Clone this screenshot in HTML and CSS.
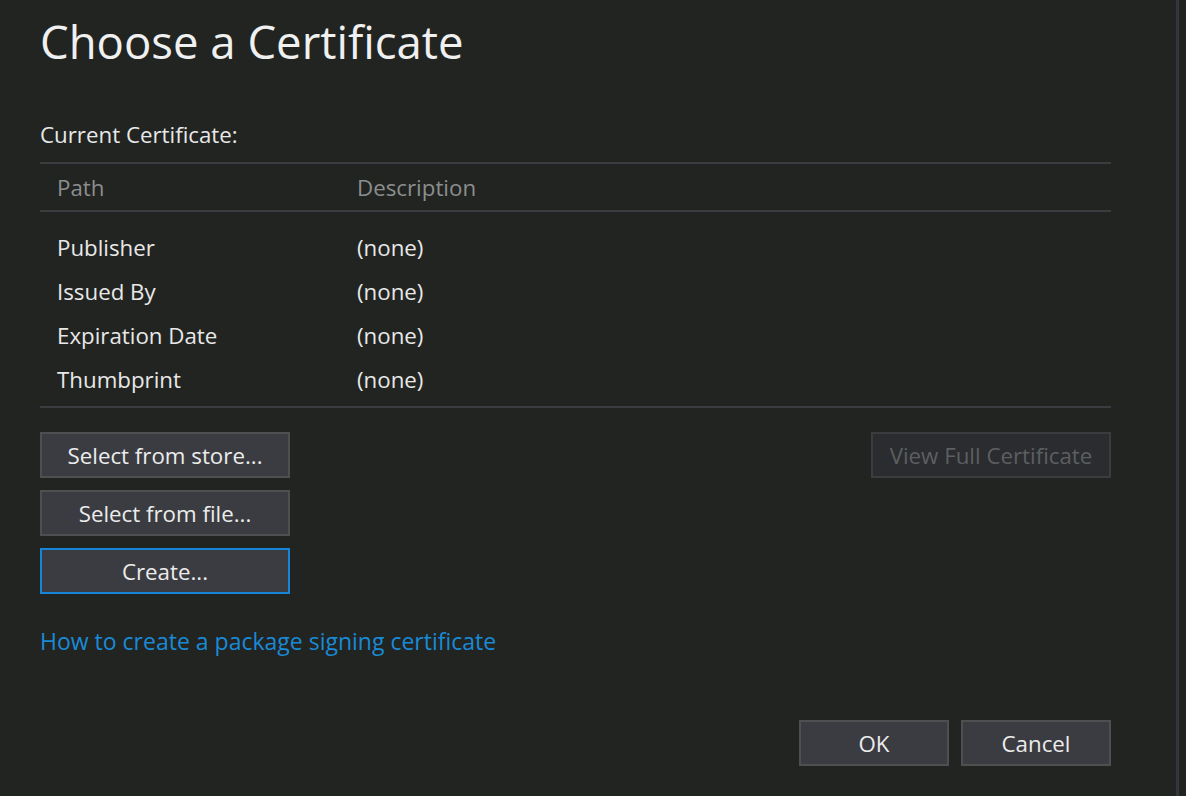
FILE: index.html
```html
<!DOCTYPE html>
<html>
<head>
<meta charset="utf-8">
<link rel="stylesheet" href="styles.css">
</head>
<body>
<div class="window">
  <div class="dialog">
    <h1 class="title">Choose a Certificate</h1>
    <div class="label">Current Certificate:</div>
    <div class="table">
      <div class="thead">
        <span class="c1">Path</span><span class="c2">Description</span>
      </div>
      <div class="tbody">
        <div class="row"><span class="c1">Publisher</span><span class="c2">(none)</span></div>
        <div class="row"><span class="c1">Issued By</span><span class="c2">(none)</span></div>
        <div class="row"><span class="c1">Expiration Date</span><span class="c2">(none)</span></div>
        <div class="row"><span class="c1">Thumbprint</span><span class="c2">(none)</span></div>
      </div>
    </div>
    <div class="actions">
      <div class="left-actions">
        <button class="btn wide">Select from store...</button>
        <button class="btn wide">Select from file...</button>
        <button class="btn wide focused">Create...</button>
      </div>
      <button class="btn view disabled">View Full Certificate</button>
    </div>
    <a class="link" href="#">How to create a package signing certificate</a>
    <div class="footer">
      <button class="btn small">OK</button>
      <button class="btn small">Cancel</button>
    </div>
  </div>
</div>
</body>
</html>
```
FILE: styles.css
```css
html, body {
  margin: 0;
  padding: 0;
  background: #212421;
  height: 100%;
}
body {
  font-family: "Open Sans", "Noto Sans", sans-serif;
  color: #e8e8e8;
  overflow: hidden;
}
.window {
  width: 1176px;
  height: 796px;
  border-right: 3px solid #33363a;
  box-sizing: content-box;
}
.dialog {
  padding: 0 65px 0 40px;
  display: flex;
  flex-direction: column;
}
.title {
  margin: 0;
  font-weight: 400;
  font-size: 45.5px;
  line-height: 56px;
  margin-top: 13px;
  color: #f0f0f0;
}
.label {
  margin-top: 52px;
  font-size: 22.3px;
  line-height: 28px;
}
.table {
  margin-top: 13px;
  border-top: 2px solid #3a3d3f;
}
.thead {
  display: flex;
  height: 46px;
  align-items: center;
  border-bottom: 2px solid #3a3d3f;
  color: #8c8e8e;
  font-size: 22.3px;
}
.c1 {
  width: 300px;
  padding-left: 17px;
  flex: none;
}
.tbody {
  padding: 13px 0 5px;
  border-bottom: 2px solid #3a3d3f;
}
.row {
  display: flex;
  height: 44px;
  align-items: center;
  font-size: 22.3px;
}
.actions {
  display: flex;
  justify-content: space-between;
  align-items: flex-start;
  margin-top: 24px;
}
.left-actions {
  display: flex;
  flex-direction: column;
  gap: 12px;
}
.btn {
  font-family: inherit;
  font-size: 22.3px;
  color: #ececec;
  background: #3a3c41;
  border: 2px solid #4d4f50;
  height: 46px;
  padding: 0;
  margin: 0;
}
.wide {
  width: 250px;
}
.focused {
  border-color: #1886d8;
}
.view {
  width: 240px;
}
.disabled {
  background: #2a2c30;
  border-color: #3a3c3e;
  color: #5d5f60;
}
.link {
  margin-top: 33px;
  color: #1a8ad6;
  text-decoration: none;
  font-size: 23px;
  line-height: 28px;
  align-self: flex-start;
}
.footer {
  margin-top: 65px;
  display: flex;
  justify-content: flex-end;
  gap: 12px;
}
.small {
  width: 150px;
}
```
